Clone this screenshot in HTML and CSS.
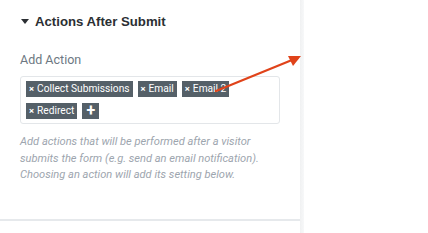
FILE: index.html
```html
<!DOCTYPE html>
<html>
<head>
<meta charset="utf-8">
<link rel="stylesheet" href="styles.css">
</head>
<body>
<div class="page">
  <div class="panel">
    <div class="section">
      <div class="heading"><span class="caret"></span><span>Actions After Submit</span></div>
      <div class="control">
        <div class="label">Add Action</div>
        <div class="select">
          <span class="tag"><span class="x">×</span>Collect Submissions</span>
          <span class="tag"><span class="x">×</span>Email</span>
          <span class="tag"><span class="x">×</span>Email 2</span>
          <span class="tag"><span class="x">×</span>Redirect</span>
          <span class="tag plus">+</span>
        </div>
        <p class="help">Add actions that will be performed after a visitor submits the form (e.g. send an email notification). Choosing an action will add its setting below.</p>
      </div>
    </div>
  </div>
  <div class="shadow"></div>
  <div class="canvas"></div>
  <svg class="arrow" width="428" height="233" viewBox="0 0 428 233">
    <line x1="216" y1="91" x2="292" y2="60" stroke="#e0431a" stroke-width="2.2" stroke-linecap="round"/>
    <polygon points="301,56 288,56 293,66" fill="#e0431a"/>
  </svg>
</div>
</body>
</html>
```
FILE: styles.css
```css
html, body { margin: 0; padding: 0; background: #fff; }
.page { position: relative; width: 428px; height: 233px; display: flex; overflow: hidden; }
.panel { width: 300px; height: 233px; background: #fff; }
.section { height: 221px; border-bottom: 2px solid #e6e9ec; box-sizing: border-box; padding: 12px 20px 0 20px; }
.heading { display: flex; align-items: center; gap: 6px; font-family: "Liberation Sans", Arial, sans-serif; font-weight: bold; font-size: 13.2px; color: #2b2f33; height: 19px; margin-left: 1px; }
.caret { width: 0; height: 0; border-left: 4px solid transparent; border-right: 4px solid transparent; border-top: 5px solid #2b2f33; }
.control { margin-top: 21px; }
.label { font-family: Roboto, "Liberation Sans", sans-serif; font-size: 12.5px; color: #6d7882; line-height: 16px; }
.select { margin-top: 8px; width: 260px; box-sizing: border-box; border: 1px solid #e3e6e9; border-radius: 3px; padding: 4px 5px 4px 5px; display: flex; flex-wrap: wrap; gap: 6px 5px; }
.tag { background: #556068; color: #fff; font-family: Roboto, "Liberation Sans", sans-serif; font-size: 10.2px; height: 16px; line-height: 16px; padding: 0 3px 0 3px; display: inline-flex; align-items: center; }
.tag .x { font-size: 9.5px; font-weight: bold; margin-right: 3px; }
.tag.plus { font-size: 16px; font-weight: bold; padding: 0 4px; width: 9px; justify-content: center; }
.help { margin: 10px 0 0 0; font-family: Roboto, "Liberation Sans", sans-serif; font-style: italic; font-size: 11.1px; line-height: 16.5px; color: #9da5ae; }
.shadow { width: 4px; height: 233px; background: linear-gradient(to right, #f0f1f2, #f7f8f9); }
.canvas { flex: 1; background: #fff; }
.arrow { position: absolute; left: 0; top: 0; }
```
